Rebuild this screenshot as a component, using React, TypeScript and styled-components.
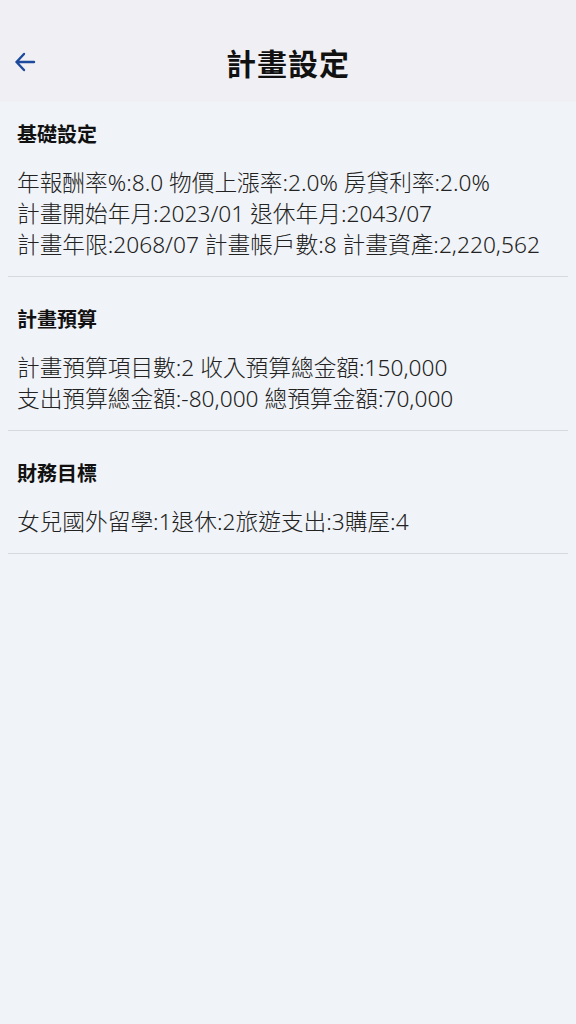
import React from "react";
import styled, { createGlobalStyle } from "styled-components";

const Global = createGlobalStyle`
  html, body { margin: 0; padding: 0; }
  body {
    background: #f0f3f7;
    font-family: "Noto Sans", "Noto Sans CJK TC", sans-serif;
    color: #1c1c1e;
  }
`;

const Page = styled.div`
  min-height: 1024px;
  background: #f0f3f7;
`;

const Header = styled.header`
  height: 102px;
  box-sizing: border-box;
  padding-top: 22px;
  background: #efeff4;
  display: grid;
  grid-template-columns: 1fr auto 1fr;
  align-items: center;
`;

const BackButton = styled.button`
  justify-self: start;
  margin-left: 10px;
  width: 30px;
  height: 30px;
  padding: 0;
  border: none;
  background: none;
  display: flex;
  align-items: center;
  justify-content: center;
  color: #1d4a9c;
`;

const Title = styled.h1`
  margin: 0;
  font-family: "Noto Sans CJK TC", sans-serif;
  font-size: 30px;
  font-weight: 700;
  letter-spacing: 1px;
  color: #111;
  line-height: 40px;
`;

const List = styled.main`
  padding: 0 8px;
`;

const Section = styled.section<{ $first?: boolean }>`
  padding: ${(p) => (p.$first ? "18px" : "28px")} 9px 16px;
  border-bottom: 1.5px solid #d6d9dd;
`;

const SectionTitle = styled.h2`
  margin: 0 0 19px;
  font-family: "Noto Sans CJK TC", sans-serif;
  font-size: 20px;
  font-weight: 700;
  line-height: 28px;
  color: #111;
`;

const Line = styled.div`
  font-size: 22.7px;
  font-weight: 300;
  line-height: 31px;
  color: #222;
  white-space: nowrap;
`;

const sections = [
  {
    title: "基礎設定",
    lines: [
      "年報酬率%:8.0 物價上漲率:2.0% 房貸利率:2.0%",
      "計畫開始年月:2023/01 退休年月:2043/07",
      "計畫年限:2068/07 計畫帳戶數:8 計畫資產:2,220,562",
    ],
  },
  {
    title: "計畫預算",
    lines: [
      "計畫預算項目數:2 收入預算總金額:150,000",
      "支出預算總金額:-80,000 總預算金額:70,000",
    ],
  },
  {
    title: "財務目標",
    lines: ["女兒國外留學:1退休:2旅遊支出:3購屋:4"],
  },
];

export default function App() {
  return (
    <Page>
      <Global />
      <Header>
        <BackButton aria-label="返回">
          <svg width="24" height="24" viewBox="0 0 24 24" fill="none" stroke="currentColor" strokeWidth="2.4" strokeLinecap="round" strokeLinejoin="round">
            <path d="M21 12H3.5M11 4L3.5 12 11 20" />
          </svg>
        </BackButton>
        <Title>計畫設定</Title>
        <div />
      </Header>
      <List>
        {sections.map((s, i) => (
          <Section key={s.title} $first={i === 0}>
            <SectionTitle>{s.title}</SectionTitle>
            {s.lines.map((l) => (
              <Line key={l}>{l}</Line>
            ))}
          </Section>
        ))}
      </List>
    </Page>
  );
}
